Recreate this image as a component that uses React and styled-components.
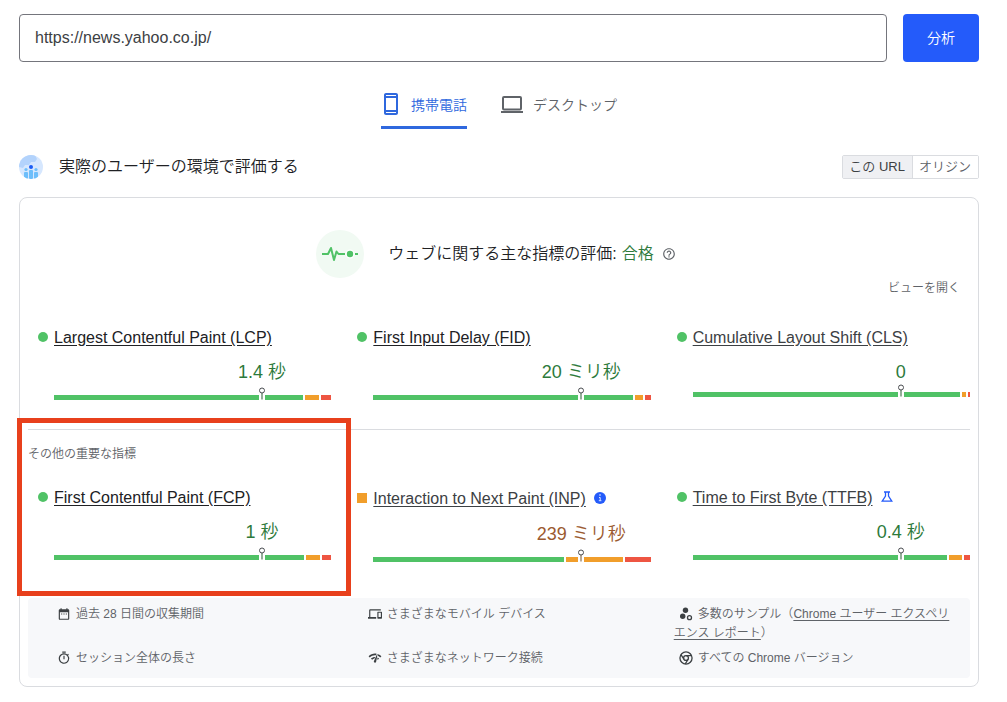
import React, { useState } from "react";
import styled, { createGlobalStyle } from "styled-components";
import {
  MdDateRange,
  MdDevices,
  MdHelpOutline,
  MdNetworkCheck,
  MdOutlineTimer,
} from "react-icons/md";

const GREEN = "#50c266";
const ORANGE = "#f19e2b";
const RED = "#ee5542";
const BLUE = "#245bfa";

const GlobalStyle = createGlobalStyle`
  * {
    box-sizing: border-box;
  }
  body {
    margin: 0;
    background: #fff;
    color: #202124;
    font-family: "Liberation Sans", "Noto Sans CJK JP", sans-serif;
    font-weight: 350;
  }
  button, input {
    font: inherit;
    color: inherit;
  }
  button {
    cursor: pointer;
  }
`;

const Page = styled.main`
  padding: 14px 28px 14px 19px;
`;

const SearchForm = styled.form`
  display: flex;
  gap: 16px;
`;

const UrlInput = styled.input`
  flex: 1;
  min-width: 0;
  height: 48px;
  padding: 0 15px;
  border: 1px solid #74757c;
  border-radius: 4px;
  color: #3c4043;
  font-size: 16px;
`;

const AnalyzeButton = styled.button`
  width: 76px;
  padding: 0 0 2px;
  border: 0;
  border-radius: 4px;
  background: ${BLUE};
  color: #fff;
  font-size: 14px;
`;

const Tabs = styled.div`
  display: flex;
  justify-content: center;
  gap: 34px;
  margin-top: 18px;
`;

const Tab = styled.button`
  display: flex;
  align-items: center;
  gap: 10px;
  height: 49px;
  padding: 2px 0 0;
  border: 0;
  border-bottom: 3px solid ${(p) => (p.$active ? "#2f68de" : "transparent")};
  background: none;
  color: ${(p) => (p.$active ? "#2f68de" : "#5f6368")};
  font-size: 14px;
`;

const SectionHeader = styled.header`
  display: flex;
  align-items: center;
  gap: 16px;
  margin-top: 26px;
`;

const SectionTitle = styled.h1`
  flex: 1;
  margin: 0;
  font-size: 16px;
  font-weight: inherit;
  line-height: 24px;
`;

const Toggle = styled.div`
  display: flex;
  height: 24px;
  border: 1px solid #dadce0;
  border-radius: 2px;
`;

const ToggleButton = styled.button`
  padding: 0 7px 0 6px;
  border: 0;
  background: ${(p) => (p.$active ? "#eff0f3" : "#fff")};
  color: ${(p) => (p.$active ? "#3c4043" : "#5f6368")};
  font-size: 13px;
  line-height: 22px;

  & + & {
    border-left: 1px solid #dadce0;
  }
`;

const Card = styled.section`
  margin-top: 18px;
  padding: 32px 8px 8px;
  border: 1px solid #dadce0;
  border-radius: 8px;
`;

const Summary = styled.div`
  display: flex;
  align-items: center;
  justify-content: center;
  gap: 24px;
`;

const SummaryText = styled.h2`
  display: flex;
  align-items: center;
  gap: 5px;
  margin: 0;
  font-size: 16px;
  font-weight: inherit;
  line-height: 24px;
`;

const Passed = styled.span`
  color: #2d7a3b;
`;

const HelpButton = styled.button`
  display: flex;
  padding: 0 6px 0 3px;
  border: 0;
  background: none;
  color: #5f6368;
`;

const ExpandRow = styled.div`
  display: flex;
  justify-content: flex-end;
  padding-right: 10px;
`;

const ExpandButton = styled.button`
  padding: 0;
  border: 0;
  background: none;
  color: #5f6368;
  font-size: 12px;
  line-height: 20px;
`;

const MetricGrid = styled.div`
  display: grid;
  grid-template-columns: repeat(3, 1fr);
  gap: 26px;
  margin-top: ${(p) => p.$top}px;
  padding-left: 10px;
`;

const MetricHead = styled.div`
  display: flex;
  align-items: center;
  min-height: ${(p) => (p.$tall ? 26 : 24)}px;
`;

const Marker = styled.span`
  width: 10px;
  height: 10px;
  margin-right: 6px;
  border-radius: ${(p) => (p.$rating === "average" ? "0" : "50%")};
  background: ${(p) => (p.$rating === "average" ? ORANGE : GREEN)};
`;

const MetricLink = styled.a`
  padding-top: 2px;
  color: ${(p) => (p.$soft ? "#3c4043" : "#202124")};
  font-size: 16px;
  line-height: 22px;
  text-underline-offset: 2px;
`;

const MetricBadge = styled.span`
  display: flex;
  margin-left: 8px;
`;

const MetricValue = styled.div`
  margin-top: 9px;
  padding-left: calc(50% + 8px);
  color: ${(p) => (p.$rating === "average" ? "#9b5a30" : "#2d7a3b")};
  font-size: 18px;
  line-height: 28px;
  text-align: center;
  white-space: nowrap;
`;

const Gauge = styled.div`
  position: relative;
  display: flex;
  gap: 2px;
  margin: ${(p) => (p.$unitless ? 6 : 9)}px 0 0 16px;
`;

const Segment = styled.span`
  height: 5px;
  background: ${(p) => p.$color};
`;

const Pin = styled.svg`
  position: absolute;
  left: 75%;
  bottom: 0;
  transform: translateX(-50%);
`;

const OtherMetrics = styled.section`
  position: relative;
  margin-top: 29px;
  padding-top: 16px;
  border-top: 1px solid #dadce0;
`;

const OtherTitle = styled.h3`
  margin: 0;
  color: #5f6368;
  font-size: 12px;
  font-weight: inherit;
  line-height: 16px;
`;

const Highlight = styled.div`
  position: absolute;
  top: -12px;
  left: -11px;
  width: calc(100% / 3 + 20px);
  height: 178px;
  border: 5px solid #e8401c;
  pointer-events: none;
`;

const Notes = styled.ul`
  display: grid;
  grid-template-columns: repeat(3, 33%);
  row-gap: 6px;
  margin: 36px 0 0;
  padding: 7px 0 10px;
  border-radius: 4px;
  background: #f7f8fa;
  list-style: none;
`;

const Note = styled.li`
  padding: 0 4px 0 24px;
  color: #5f6368;
  font-size: 12px;
  line-height: 19px;

  svg {
    margin: 0 5px;
    color: #3c4043;
    vertical-align: -3px;
  }

  a {
    color: #5f6368;
    text-underline-offset: 2px;
  }
`;

const PhoneIcon = () => (
  <svg width="20" height="24" viewBox="2 0 20 24" fill="currentColor">
    <path d="M17 1H7C5.9 1 5 1.9 5 3v18c0 1.1.9 2 2 2h10c1.1 0 2-.9 2-2V3c0-1.1-.9-2-2-2zm0 20H7v-1h10v1zm0-3H7V6h10v12zm0-14H7V3h10v1z" />
  </svg>
);

const LaptopIcon = () => (
  <svg width="22" height="24" viewBox="0 0 22 24" fill="none">
    <rect x="2" y="5" width="18" height="12.5" rx="1" stroke="currentColor" strokeWidth="2" />
    <path d="M0 20h22" stroke="currentColor" strokeWidth="2" />
  </svg>
);

const UsersIcon = () => (
  <svg width="24" height="24" viewBox="0 0 24 24">
    <clipPath id="globe">
      <circle cx="12" cy="12" r="12" />
    </clipPath>
    <g clipPath="url(#globe)">
      <rect width="24" height="24" fill="#d6e7fe" />
      <path d="M0 0h16l2 4-2 3h-4l-2 3H6l-2 3-4-1z" fill="#b3d3fc" />
      <g fill="#6dbefa">
        <circle cx="7" cy="14.5" r="1.6" />
        <circle cx="17" cy="14.5" r="1.6" />
        <rect x="5" y="17" width="4" height="7" rx="1" />
        <rect x="10" y="15" width="4" height="9" rx="1" />
        <rect x="15" y="17" width="4" height="7" rx="1" />
      </g>
      <circle cx="12" cy="12" r="2" fill="#1b5cf5" />
    </g>
  </svg>
);

const PulseIcon = () => (
  <svg width="48" height="48" viewBox="0 0 48 48" fill="none">
    <circle cx="24" cy="24" r="24" fill="#f1faf3" />
    <path
      d="M6 24h6l3-6 3 12 2.500-8.500 2 2.500H29M39 24h3"
      stroke={GREEN}
      strokeWidth="2"
      strokeLinejoin="round"
    />
    <circle cx="34" cy="24" r="4.500" fill="#fff" />
    <circle cx="34" cy="24" r="3.200" fill={GREEN} />
  </svg>
);

const InfoIcon = () => (
  <svg width="12" height="12" viewBox="0 0 12 12">
    <circle cx="6" cy="6" r="6" fill={BLUE} />
    <path d="M5 3h2M5 5.500h1.200V8.500M4.800 8.700h2.600" stroke="#dce6ff" fill="none" />
  </svg>
);

const FlaskIcon = () => (
  <svg width="12" height="12" viewBox="0 0 12 12" fill="none" stroke={BLUE} strokeWidth="1.300">
    <path d="M3 1h6M4.500 1v4L1.200 10.200h9.600L7.500 5V1" />
  </svg>
);

const SamplesIcon = () => (
  <svg width="14" height="14" viewBox="0 0 14 14">
    <circle cx="6.500" cy="3.300" r="2.700" fill="currentColor" />
    <circle cx="3.700" cy="9.200" r="2.700" fill="currentColor" />
    <circle cx="10.500" cy="10.700" r="2" fill="none" stroke="currentColor" strokeWidth="1.300" />
  </svg>
);

const ChromeIcon = () => (
  <svg
    width="14"
    height="14"
    viewBox="0 0 15 15"
    fill="none"
    stroke="currentColor"
    strokeWidth="1.400"
  >
    <circle cx="7.500" cy="7.500" r="6.500" />
    <circle cx="7.500" cy="7.500" r="2.600" />
    <path d="M7.500 4.900h6M5.250 8.800l-3.200-5M9.750 8.800l-3 5" />
  </svg>
);

const coreMetrics = [
  { name: "Largest Contentful Paint (LCP)", value: "1.4 秒", shares: [249, 14, 10] },
  { name: "First Input Delay (FID)", value: "20 ミリ秒", shares: [260, 8, 6] },
  {
    name: "Cumulative Layout Shift (CLS)",
    value: "0",
    shares: [267, 4, 2],
    soft: true,
    unitless: true,
  },
];

const otherMetrics = [
  { name: "First Contentful Paint (FCP)", value: "1 秒", shares: [250, 14, 9] },
  {
    name: "Interaction to Next Paint (INP)",
    value: "239 ミリ秒",
    shares: [191, 57, 26],
    rating: "average",
    soft: true,
    badge: <InfoIcon />,
    tall: true,
  },
  {
    name: "Time to First Byte (TTFB)",
    value: "0.4 秒",
    shares: [254, 13, 6],
    soft: true,
    badge: <FlaskIcon />,
  },
];

const Metric = ({ name, value, shares, rating, soft, badge, tall, unitless }) => (
  <article>
    <MetricHead $tall={tall}>
      <Marker $rating={rating} />
      <MetricLink href="#" $soft={soft}>
        {name}
      </MetricLink>
      {badge && <MetricBadge>{badge}</MetricBadge>}
    </MetricHead>
    <MetricValue $rating={rating}>{value}</MetricValue>
    <Gauge $unitless={unitless}>
      {[GREEN, ORANGE, RED].map((color, i) => (
        <Segment key={color} $color={color} style={{ flexGrow: shares[i] }} />
      ))}
      <Pin width="8" height="13" viewBox="0 0 8 13">
        <path d="M1 8h6v5H1z" fill="#fff" />
        <path
          d="M4 6v6.500"
          stroke={rating === "average" ? "#b9a996" : "#94ad99"}
          strokeWidth="2"
        />
        <circle cx="4" cy="3.500" r="2.500" fill="#fff" stroke="#4a4d51" />
      </Pin>
    </Gauge>
  </article>
);

const App = () => {
  const [url, setUrl] = useState("https://news.yahoo.co.jp/");
  const [device, setDevice] = useState("mobile");
  const [scope, setScope] = useState("url");

  return (
    <Page lang="ja">
      <GlobalStyle />
      <SearchForm onSubmit={(e) => e.preventDefault()}>
        <UrlInput
          type="text"
          aria-label="URL"
          value={url}
          onChange={(e) => setUrl(e.target.value)}
        />
        <AnalyzeButton type="submit">分析</AnalyzeButton>
      </SearchForm>

      <Tabs role="tablist">
        <Tab
          role="tab"
          aria-selected={device === "mobile"}
          $active={device === "mobile"}
          onClick={() => setDevice("mobile")}
        >
          <PhoneIcon />
          携帯電話
        </Tab>
        <Tab
          role="tab"
          aria-selected={device === "desktop"}
          $active={device === "desktop"}
          onClick={() => setDevice("desktop")}
        >
          <LaptopIcon />
          デスクトップ
        </Tab>
      </Tabs>

      <SectionHeader>
        <UsersIcon />
        <SectionTitle>実際のユーザーの環境で評価する</SectionTitle>
        <Toggle>
          <ToggleButton $active={scope === "url"} onClick={() => setScope("url")}>
            この URL
          </ToggleButton>
          <ToggleButton $active={scope === "origin"} onClick={() => setScope("origin")}>
            オリジン
          </ToggleButton>
        </Toggle>
      </SectionHeader>

      <Card>
        <Summary>
          <PulseIcon />
          <SummaryText>
            ウェブに関する主な指標の評価: <Passed>合格</Passed>
            <HelpButton aria-label="ヘルプ">
              <MdHelpOutline size={14} />
            </HelpButton>
          </SummaryText>
        </Summary>
        <ExpandRow>
          <ExpandButton>ビューを開く</ExpandButton>
        </ExpandRow>

        <MetricGrid $top={27}>
          {coreMetrics.map((m) => (
            <Metric key={m.name} {...m} />
          ))}
        </MetricGrid>

        <OtherMetrics>
          <OtherTitle>その他の重要な指標</OtherTitle>
          <MetricGrid $top={23}>
            {otherMetrics.map((m) => (
              <Metric key={m.name} {...m} />
            ))}
          </MetricGrid>
          <Highlight />
        </OtherMetrics>

        <Notes>
          <Note>
            <MdDateRange size={14} />
            過去 28 日間の収集期間
          </Note>
          <Note>
            <MdDevices size={14} />
            さまざまなモバイル デバイス
          </Note>
          <Note>
            <SamplesIcon />
            多数のサンプル（<a href="#">Chrome ユーザー エクスペリエンス レポート</a>）
          </Note>
          <Note>
            <MdOutlineTimer size={14} />
            セッション全体の長さ
          </Note>
          <Note>
            <MdNetworkCheck size={14} />
            さまざまなネットワーク接続
          </Note>
          <Note>
            <ChromeIcon />
            すべての Chrome バージョン
          </Note>
        </Notes>
      </Card>
    </Page>
  );
};

export default App;
